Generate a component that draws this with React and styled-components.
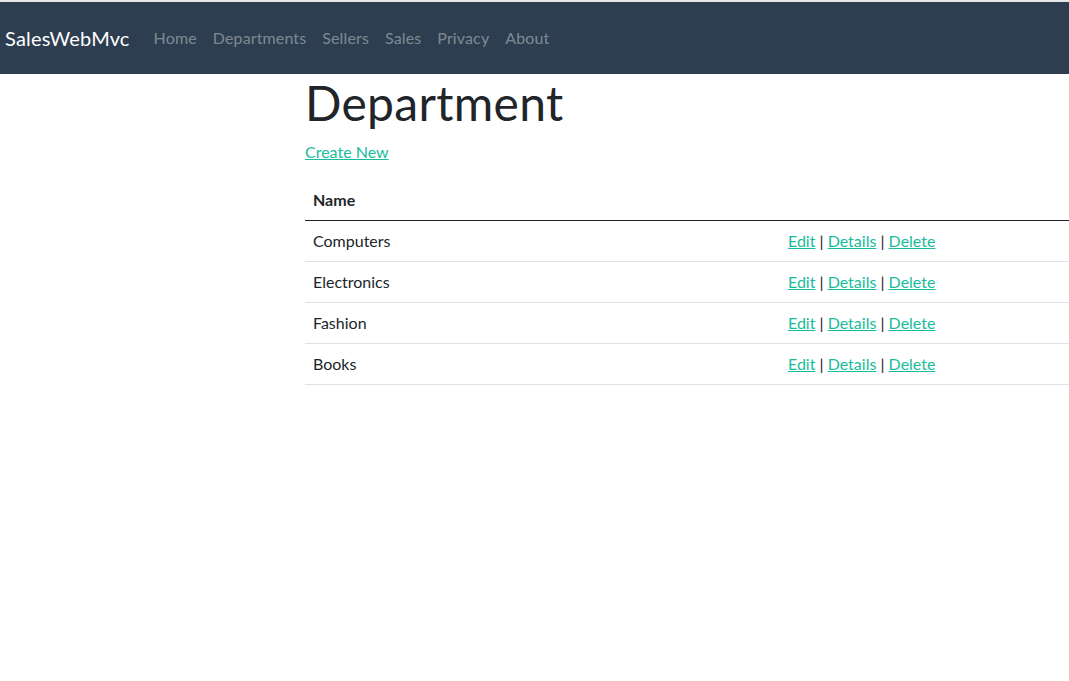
import React from "react";
import styled, { createGlobalStyle } from "styled-components";

const departments = ["Computers", "Electronics", "Fashion", "Books"];
const navLinks = ["Home", "Departments", "Sellers", "Sales", "Privacy", "About"];

function App() {
	return (
		<>
			<GlobalStyle />
			<Navbar>
				<Brand href="#">SalesWebMvc</Brand>
				<NavList>
					{navLinks.map((l) => (
						<NavLink key={l} href="#">
							{l}
						</NavLink>
					))}
				</NavList>
			</Navbar>
			<Main>
				<Title>Department</Title>
				<CreateLine>
					<TealLink href="#">Create New</TealLink>
				</CreateLine>
				<Table>
					<thead>
						<tr>
							<HeadCell>Name</HeadCell>
							<HeadCell />
						</tr>
					</thead>
					<tbody>
						{departments.map((d) => (
							<tr key={d}>
								<Cell>{d}</Cell>
								<Cell>
									<TealLink href="#">Edit</TealLink> |{" "}
									<TealLink href="#">Details</TealLink> |{" "}
									<TealLink href="#">Delete</TealLink>
								</Cell>
							</tr>
						))}
					</tbody>
				</Table>
			</Main>
		</>
	);
}

const GlobalStyle = createGlobalStyle`
	html, body {
		margin: 0;
		padding: 0;
		overflow: hidden;
	}
	body {
		font-family: Lato, "Liberation Sans", sans-serif;
		font-size: 16px;
		line-height: 1.5;
		color: #212529;
		background: #fff;
		border-top: 2px solid #e6e7e8;
	}
`;

const Navbar = styled.nav`
	display: flex;
	align-items: center;
	height: 72px;
	padding: 0 5px;
	background-color: #2c3e50;
`;

const Brand = styled.a`
	font-size: 20px;
	letter-spacing: 0.18px;
	color: #fff;
	text-decoration: none;
	margin-right: 16px;
	line-height: 30px;
`;

const NavList = styled.div`
	display: flex;
	align-items: center;
`;

const NavLink = styled.a`
	padding: 8px;
	font-size: 16px;
	letter-spacing: 0.13px;
	color: rgba(255, 255, 255, 0.4);
	text-decoration: none;
`;

const Main = styled.main`
	padding-left: 305px;
`;

const Title = styled.h1`
	margin: 0 0 8px;
	font-size: 48px;
	letter-spacing: 0.3px;
	font-weight: 400;
	line-height: 1.2;
`;

const CreateLine = styled.p`
	margin: 0 0 16px;
`;

const TealLink = styled.a`
	color: #18bc9c;
	text-decoration: underline;
`;

const Table = styled.table`
	width: 100%;
	border-collapse: collapse;
	table-layout: fixed;
`;

const HeadCell = styled.th`
	box-sizing: border-box;
	text-align: left;
	font-weight: 700;
	padding: 8px;
	border-bottom: 1px solid #212529;
	&:first-child {
		width: 475px;
	}
`;

const Cell = styled.td`
	padding: 8px;
	border-bottom: 1px solid #dee2e6;
`;

export default App;
